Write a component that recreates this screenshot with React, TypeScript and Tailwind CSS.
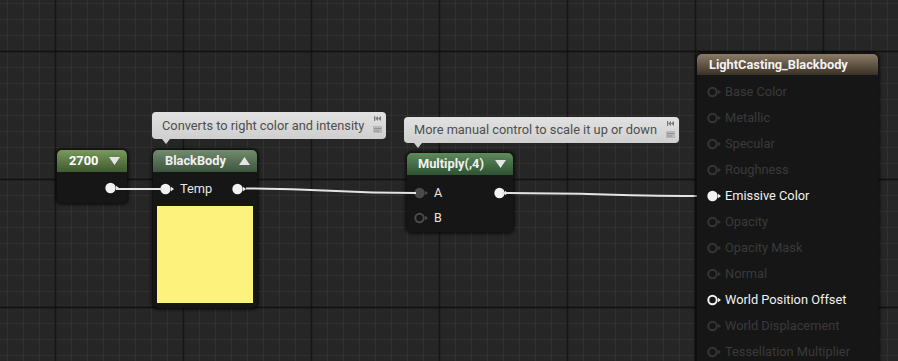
import React from "react";

const font = { fontFamily: "Roboto, 'Noto Sans', sans-serif" };

function Pin({ filled, dim, color }: { filled?: boolean; dim?: boolean; color?: string }) {
  const c = color ?? (dim ? "#363636" : "#f2f2f2");
  return (
    <svg width="15" height="12" viewBox="0 0 15 12" className="shrink-0">
      {filled ? (
        <circle cx="5.5" cy="6" r="5.2" fill={c} />
      ) : (
        <circle cx="5.5" cy="6" r="4.2" fill="none" stroke={c} strokeWidth="2" />
      )}
      <path d="M11 3.8 L14 6 L11 8.2 Z" fill={c} />
    </svg>
  );
}

function Tri({ up }: { up?: boolean }) {
  return (
    <svg width="11" height="8" viewBox="0 0 11 8" className="shrink-0">
      <path d={up ? "M0 8 L5.5 0 L11 8 Z" : "M0 0 L11 0 L5.5 8 Z"} fill="#e6e6e6" />
    </svg>
  );
}

function Grid() {
  const minorX: number[] = [];
  const minorY: number[] = [];
  for (let x = 7; x < 898; x += 16) minorX.push(x);
  for (let y = 3; y < 361; y += 16) minorY.push(y);
  const majorX = [55, 183, 311, 439, 567, 695, 823];
  const majorY = [51, 179, 307];
  return (
    <svg className="absolute inset-0" width="898" height="361">
      {minorX.map((x) => (
        <line key={"vx" + x} x1={x + 0.5} y1="0" x2={x + 0.5} y2="361" stroke="#313131" strokeWidth="1" />
      ))}
      {minorY.map((y) => (
        <line key={"hy" + y} x1="0" y1={y + 0.5} x2="898" y2={y + 0.5} stroke="#313131" strokeWidth="1" />
      ))}
      {majorX.map((x) => (
        <line key={"mx" + x} x1={x + 0.5} y1="0" x2={x + 0.5} y2="361" stroke="#151515" strokeWidth="1.5" />
      ))}
      {majorY.map((y) => (
        <line key={"my" + y} x1="0" y1={y + 0.5} x2="898" y2={y + 0.5} stroke="#101010" strokeWidth="1.5" />
      ))}
    </svg>
  );
}

function Wires() {
  return (
    <svg className="absolute inset-0" width="898" height="361">
      <g stroke="#e4e4e4" strokeWidth="2" fill="none">
        <path d="M116 189 L162 189" />
        <path d="M246 188.5 C 330 188.5, 330 193, 416 193" />
        <path d="M502 193 C 600 193, 610 196, 709 196" />
      </g>
    </svg>
  );
}

function CommentIcons() {
  return (
    <div className="absolute right-[4px] top-[4px] flex flex-col items-center gap-[5px]">
      <svg width="8" height="5" viewBox="0 0 8 5">
        <path d="M0 0 L1.2 0 L1.2 5 L0 5 Z M1.2 2.5 L4 0 L4 5 Z M4 2.5 L7 0 L7 5 Z" fill="#7a7a7a" />
      </svg>
      <svg width="9" height="7" viewBox="0 0 9 7">
        <rect x="0" y="0" width="9" height="7" fill="#b8b8b8" />
        <rect x="1" y="2" width="7" height="1" fill="#8f8f8f" />
        <rect x="1" y="4.5" width="5" height="1" fill="#8f8f8f" />
      </svg>
    </div>
  );
}

function CommentBubble({ text, className }: { text: string; className: string }) {
  return (
    <div className={"absolute " + className}>
      <div className="relative h-full w-full rounded-[4px] bg-gradient-to-b from-[#e2e2e2] to-[#cfcfcf] flex items-center pl-[10px] text-[12.8px] text-[#4e4e4e]" style={font}>
        {text}
        <CommentIcons />
        <div className="absolute left-[10px] bottom-[-5px] w-0 h-0 border-l-[4px] border-r-[4px] border-t-[5px] border-l-transparent border-r-transparent border-t-[#d0d0d0]" />
      </div>
    </div>
  );
}

export default function App() {
  const rows: { label: string; active?: boolean; filled?: boolean }[] = [
    { label: "Base Color" },
    { label: "Metallic" },
    { label: "Specular" },
    { label: "Roughness" },
    { label: "Emissive Color", active: true, filled: true },
    { label: "Opacity" },
    { label: "Opacity Mask" },
    { label: "Normal" },
    { label: "World Position Offset", active: true },
    { label: "World Displacement" },
    { label: "Tessellation Multiplier" },
  ];

  return (
    <div className="relative w-[898px] h-[361px] overflow-hidden bg-[#262626]" style={font}>
      <Grid />

      {/* 2700 constant node */}
      <div className="absolute left-[57px] top-[150px] w-[70px] h-[53px] rounded-[5px] bg-[#161616] shadow-[0_0_3px_2px_rgba(0,0,0,0.6)] flex flex-col overflow-hidden">
        <div className="h-[22px] bg-gradient-to-b from-[#7a9a5c] to-[#3f5a30] flex items-center justify-between pl-[12px] pr-[7px]">
          <span className="text-white font-bold text-[12.8px]">2700</span>
          <Tri />
        </div>
        <div className="flex-1 flex items-center justify-end pr-[7px]">
          <Pin filled />
        </div>
      </div>

      {/* BlackBody node */}
      <div className="absolute left-[153px] top-[150px] w-[104px] h-[158px] rounded-[5px] bg-[#161616] shadow-[0_0_3px_2px_rgba(0,0,0,0.6)] flex flex-col overflow-hidden">
        <div className="h-[22px] bg-gradient-to-b from-[#728b6e] to-[#3f5540] flex items-center justify-between pl-[12px] pr-[7px]">
          <span className="text-[#f0f0f0] font-bold text-[12.8px]">BlackBody</span>
          <Tri up />
        </div>
        <div className="h-[34px] flex items-center pl-[7px] pr-[10px]">
          <Pin filled />
          <span className="ml-[5px] text-[#e6e6e6] text-[12.8px]">Temp</span>
          <div className="flex-1" />
          <Pin filled />
        </div>
        <div className="mx-[4px] h-[97px] bg-[#fdf27c]" />
      </div>

      {/* Multiply node */}
      <div className="absolute left-[407px] top-[153px] w-[106px] h-[79px] rounded-[5px] bg-[#161616] shadow-[0_0_3px_2px_rgba(0,0,0,0.6)] flex flex-col overflow-hidden">
        <div className="h-[22px] bg-gradient-to-b from-[#5f8a5e] to-[#2f5232] flex items-center justify-between pl-[11px] pr-[7px]">
          <span className="text-[#f0f0f0] font-bold text-[12.8px]">Multiply(,4)</span>
          <Tri />
        </div>
        <div className="h-[28px] mt-[4px] flex items-center pl-[7px] pr-[4px]">
          <Pin filled color="#4a4a4a" />
          <span className="ml-[5px] text-[#e6e6e6] text-[12.5px]">A</span>
          <div className="flex-1" />
          <Pin filled />
        </div>
        <div className="h-[22px] flex items-center pl-[7px]">
          <Pin color="#4a4a4a" />
          <span className="ml-[5px] text-[#e6e6e6] text-[12.5px]">B</span>
        </div>
      </div>

      <Wires />

      <CommentBubble text="Converts to right color and intensity" className="left-[152px] top-[112px] w-[234px] h-[27px]" />
      <CommentBubble text="More manual control to scale it up or down" className="left-[404px] top-[117px] w-[275px] h-[26px]" />

      {/* Material result node */}
      <div className="absolute left-[697px] top-[54px] w-[181px] h-[330px] rounded-[5px] bg-[#161616] shadow-[0_0_3px_2px_rgba(0,0,0,0.6)] flex flex-col overflow-hidden">
        <div className="h-[21px] bg-gradient-to-b from-[#8c7c65] to-[#3a3228] flex items-center pl-[12px]">
          <span className="text-[#f2f2f2] font-bold text-[12.8px]">LightCasting_Blackbody</span>
        </div>
        <div className="flex flex-col pt-[4px]">
          {rows.map((r) => (
            <div key={r.label} className="h-[26px] flex items-center pl-[10px]">
              <Pin filled={r.filled} dim={!r.active} />
              <span className={"ml-[3px] text-[12.8px] " + (r.active ? "text-[#f0f0f0]" : "text-[#3a3a3a]")}>{r.label}</span>
            </div>
          ))}
        </div>
      </div>
    </div>
  );
}
